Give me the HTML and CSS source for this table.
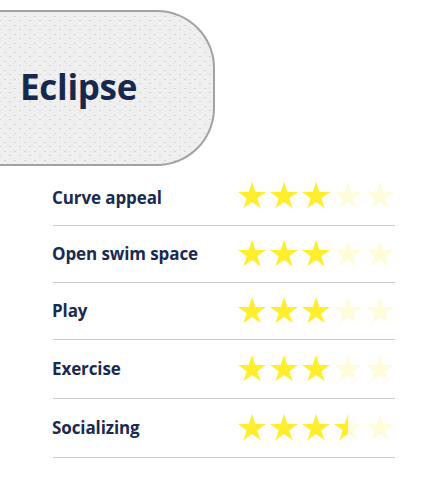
FILE: index.html
```html
<!DOCTYPE html>
<html lang="en">
<head>
<meta charset="utf-8">
<title>Eclipse</title>
<link rel="stylesheet" href="styles.css">
</head>
<body>
<svg class="defs" width="0" height="0" aria-hidden="true">
  <defs>
    <linearGradient id="half" x1="0" x2="1" y1="0" y2="0">
      <stop offset="50%" stop-color="#ffee2e"/>
      <stop offset="50%" stop-color="#fffcdc"/>
    </linearGradient>
    <polygon id="star" points="50,0 61.8,36.4 100,36.4 69.1,58.8 80.9,95.1 50,72.7 19.1,95.1 30.9,58.8 0,36.4 38.2,36.4"/>
  </defs>
</svg>

<header class="banner">
  <h1 class="title">Eclipse</h1>
</header>

<ul class="ratings">
  <li class="row first">
    <span class="label">Curve appeal</span>
    <span class="stars">
      <svg class="star on" viewBox="0 0 100 95"><use href="#star"/></svg>
      <svg class="star on" viewBox="0 0 100 95"><use href="#star"/></svg>
      <svg class="star on" viewBox="0 0 100 95"><use href="#star"/></svg>
      <svg class="star off" viewBox="0 0 100 95"><use href="#star"/></svg>
      <svg class="star off" viewBox="0 0 100 95"><use href="#star"/></svg>
    </span>
  </li>
  <li class="row">
    <span class="label">Open swim space</span>
    <span class="stars">
      <svg class="star on" viewBox="0 0 100 95"><use href="#star"/></svg>
      <svg class="star on" viewBox="0 0 100 95"><use href="#star"/></svg>
      <svg class="star on" viewBox="0 0 100 95"><use href="#star"/></svg>
      <svg class="star off" viewBox="0 0 100 95"><use href="#star"/></svg>
      <svg class="star off" viewBox="0 0 100 95"><use href="#star"/></svg>
    </span>
  </li>
  <li class="row">
    <span class="label">Play</span>
    <span class="stars">
      <svg class="star on" viewBox="0 0 100 95"><use href="#star"/></svg>
      <svg class="star on" viewBox="0 0 100 95"><use href="#star"/></svg>
      <svg class="star on" viewBox="0 0 100 95"><use href="#star"/></svg>
      <svg class="star off" viewBox="0 0 100 95"><use href="#star"/></svg>
      <svg class="star off" viewBox="0 0 100 95"><use href="#star"/></svg>
    </span>
  </li>
  <li class="row tall">
    <span class="label">Exercise</span>
    <span class="stars">
      <svg class="star on" viewBox="0 0 100 95"><use href="#star"/></svg>
      <svg class="star on" viewBox="0 0 100 95"><use href="#star"/></svg>
      <svg class="star on" viewBox="0 0 100 95"><use href="#star"/></svg>
      <svg class="star off" viewBox="0 0 100 95"><use href="#star"/></svg>
      <svg class="star off" viewBox="0 0 100 95"><use href="#star"/></svg>
    </span>
  </li>
  <li class="row tall">
    <span class="label">Socializing</span>
    <span class="stars">
      <svg class="star on" viewBox="0 0 100 95"><use href="#star"/></svg>
      <svg class="star on" viewBox="0 0 100 95"><use href="#star"/></svg>
      <svg class="star on" viewBox="0 0 100 95"><use href="#star"/></svg>
      <svg class="star half" viewBox="0 0 100 95"><use href="#star"/></svg>
      <svg class="star off" viewBox="0 0 100 95"><use href="#star"/></svg>
    </span>
  </li>
</ul>
</body>
</html>
```

FILE: styles.css
```css
html, body {
  margin: 0;
  padding: 0;
  background: #ffffff;
}

body {
  font-family: "Open Sans", "Noto Sans", "Liberation Sans", sans-serif;
  color: #1a2a50;
}

.defs {
  position: absolute;
  width: 0;
  height: 0;
}

.banner {
  box-sizing: border-box;
  margin-top: 10px;
  width: 215px;
  height: 156px;
  border: 2px solid #a2a2a2;
  border-left: none;
  border-radius: 0 58px 58px 0;
  background-color: #efefef;
  background-image:
    radial-gradient(circle, #d4d4d4 0.6px, transparent 1px),
    radial-gradient(circle, #d4d4d4 0.6px, transparent 1px);
  background-size: 10px 9px, 10px 9px;
  background-position: 0 0, 5px 4px;
  display: flex;
  align-items: center;
  padding-left: 20px;
}

.title {
  margin: 0 0 4px 0;
  font-size: 35px;
  font-weight: 700;
  color: #17284f;
  letter-spacing: -0.3px;
}

.ratings {
  list-style: none;
  margin: 1px 0 0 53px;
  padding: 0;
  width: 342px;
}

.row {
  display: flex;
  align-items: center;
  justify-content: space-between;
  padding: 13px 0 15px 0;
  border-bottom: 1px solid #cbcbcb;
}

.row.first {
  padding-bottom: 16px;
}

.row.tall {
  padding: 14px 0 16px 0;
}

.label {
  font-size: 17px;
  font-weight: 700;
  color: #1a2a50;
  margin-left: -1px;
  letter-spacing: -0.1px;
}

.row.first .label {
  margin-top: 6px;
}

.stars {
  display: flex;
  gap: 4px;
  margin-right: 1px;
}

.star {
  display: block;
  width: 28px;
  height: 28px;
}

.star.on { fill: #ffee2e; }
.star.off { fill: #fffcdc; }
.star.half { fill: url(#half); }
```
